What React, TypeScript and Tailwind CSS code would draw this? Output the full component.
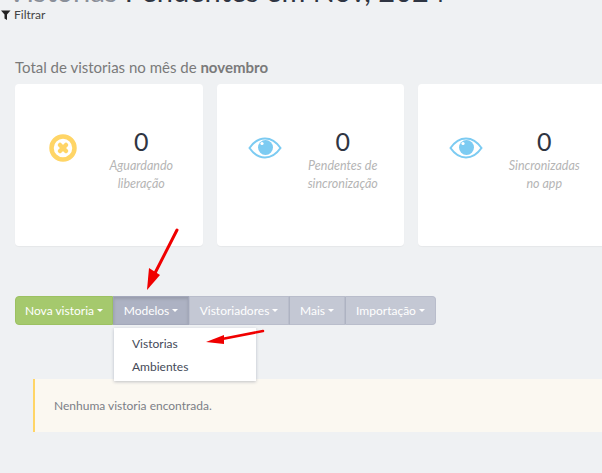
import { ReactNode } from 'react';

const CARDS = [
  { icon: 'x', top: 'Aguardando', bottom: 'liberação' },
  { icon: 'eye', top: 'Pendentes de', bottom: 'sincronização' },
  { icon: 'eye', top: 'Sincronizadas', bottom: 'no app' },
];

const BUTTONS = [
  { label: 'Nova vistoria', className: 'w-[98px] bg-[#a5c96d] rounded-l-[4px] border-[#9cc162]' },
  { label: 'Modelos', className: 'w-[76px] bg-[#adb2c3] border-[#a3a8ba] border-l-[#9fa4b7] shadow-[inset_0_2px_3px_rgba(0,0,0,0.12)]' },
  { label: 'Vistoriadores', className: 'w-[100px] bg-[#c4c8d4] border-[#b9bdcb]' },
  { label: 'Mais', className: 'w-[56px] bg-[#c4c8d4] border-[#b9bdcb] border-l-[#aeb3c2]' },
  { label: 'Importação', className: 'w-[91px] bg-[#c4c8d4] border-[#b9bdcb] border-l-[#aeb3c2] rounded-r-[4px]' },
];

function XCircle() {
  return (
    <svg width="28" height="28" viewBox="0 0 28 28" className="shrink-0">
      <circle cx="14" cy="14" r="11.5" fill="none" stroke="#ffd566" strokeWidth="4.5" />
      <path d="M11 11l6 6M17 11l-6 6" stroke="#ffd566" strokeWidth="4.5" strokeLinecap="round" />
    </svg>
  );
}

function Eye() {
  return (
    <svg width="34" height="22" viewBox="0 0 34 22" className="shrink-0">
      <path d="M1.5 11C6 4.5 11 1.5 17 1.5S28 4.5 32.5 11C28 17.5 23 20.5 17 20.5S6 17.5 1.5 11Z" fill="none" stroke="#7ccbf2" strokeWidth="2" />
      <circle cx="17.5" cy="10.5" r="7.5" fill="#7ccbf2" />
      <circle cx="14" cy="6.5" r="1.6" fill="#fff" />
    </svg>
  );
}

function Caret() {
  return <span className="inline-block ml-[3px] align-middle border-x-[3px] border-t-[3px] border-x-transparent border-t-current" />;
}

function Card({ icon, children }: { icon: string; children: ReactNode }) {
  return (
    <div className="w-[187.5px] h-[162px] shrink-0 bg-white rounded-[4px] shadow-[0_1px_1px_rgba(0,0,0,0.04)] flex px-4">
      <div className="w-16 shrink-0 flex justify-center pt-[50px]">
        <div className="h-7 flex items-center">{icon === 'x' ? <XCircle /> : <Eye />}</div>
      </div>
      <div className="flex-1 pl-[1px] pt-[40px] text-center">
        <div className="text-[25px] leading-[34px] text-[#2f3542]">0</div>
        <div className="text-[12.5px] leading-[18px] italic text-[#b5b5b5] mt-[-1px]">{children}</div>
      </div>
    </div>
  );
}

export default function App() {
  return (
    <div className="relative w-[602px] h-[473px] overflow-hidden bg-[#eff1f3] font-['Lato','Open_Sans',sans-serif]">
      <h1 className="mt-[-27px] pl-[7px] text-[29px] leading-[36px] whitespace-nowrap text-[#2f3542]">
        <span className="text-[#8a8f99]">Vistorias</span> Pendentes em Nov, 2024
      </h1>

      <div className="flex items-center h-4 mt-[-2px] text-[12px] text-[#444]">
        <svg width="10" height="10" viewBox="0 0 10 10" className="ml-[1px] mr-[3px]">
          <path d="M0 0.5h9.5L6 4.5V10L3.5 8.5V4.5Z" fill="#222" />
        </svg>
        Filtrar
      </div>

      <p className="mt-[34px] ml-[15px] text-[15px] leading-[20px] text-[#7a7a7a]">
        Total de vistorias no mês de <b className="font-bold">novembro</b>
      </p>

      <div className="flex gap-[14px] ml-[15px] mt-[7px]">
        {CARDS.map((card) => (
          <Card key={card.top} icon={card.icon}>
            {card.top}
            <br />
            {card.bottom}
          </Card>
        ))}
      </div>

      <div className="flex ml-[15px] mt-[50px] h-[29px]">
        {BUTTONS.map((btn) => (
          <div key={btn.label} className={`flex items-center justify-center border text-[12px] text-white ${btn.className}`}>
            {btn.label}
            <Caret />
          </div>
        ))}
      </div>

      <div className="ml-[33px] mt-[54px] h-[53px] bg-[#fbf8f1] border-l-2 border-[#ffd566] flex items-center pl-[19px] text-[12px] text-[#7b7f87]">
        Nenhuma vistoria encontrada.
      </div>

      <div className="absolute left-[114px] top-[328px] w-[142px] h-[53px] bg-white shadow-[0_1px_3px_rgba(60,70,100,0.3)] pt-[4px] text-[12px] text-[#444a58]">
        <div className="h-[23px] leading-[23px] pl-[18px]">Vistorias</div>
        <div className="h-[23px] leading-[23px] pl-[18px]">Ambientes</div>
      </div>

      <svg width="602" height="473" className="absolute left-0 top-0 pointer-events-none">
        <path d="M177 230L153 277" stroke="#f00000" strokeWidth="3" strokeLinecap="round" />
        <path d="M147 290L149 268L160 275Z" fill="#f00000" />
        <path d="M263 331L222 339" stroke="#f00000" strokeWidth="2.5" strokeLinecap="round" />
        <path d="M206 342L224 335L224 344Z" fill="#f00000" />
      </svg>
    </div>
  );
}
